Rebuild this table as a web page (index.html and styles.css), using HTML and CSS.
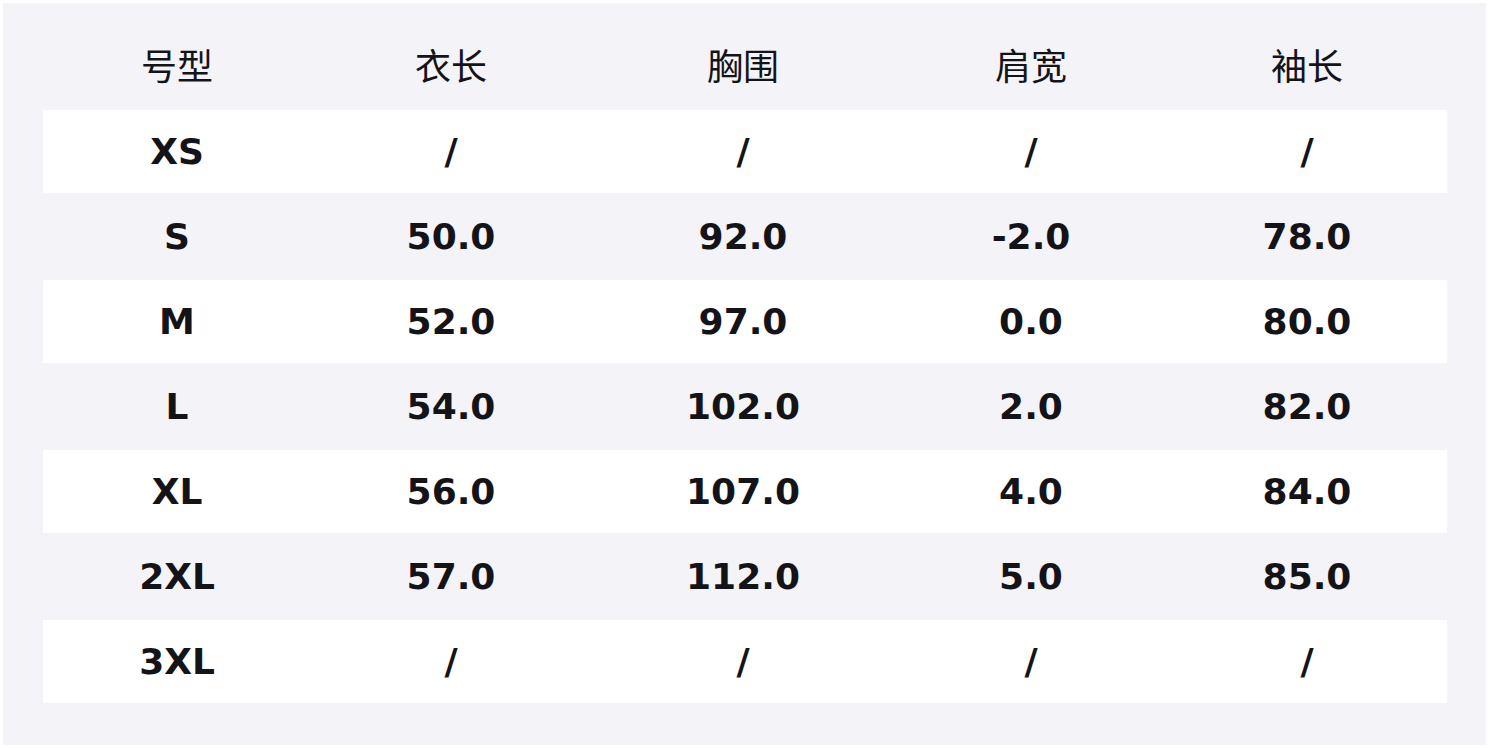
FILE: index.html
```html
<!DOCTYPE html>
<html lang="zh">
<head>
<meta charset="utf-8">
<link rel="stylesheet" href="styles.css">
</head>
<body>
<div class="panel">
  <div class="table">
    <div class="row head">
      <div class="cell">号型</div><div class="cell">衣长</div><div class="cell">胸围</div><div class="cell">肩宽</div><div class="cell">袖长</div>
    </div>
    <div class="row white">
      <div class="cell">XS</div><div class="cell">/</div><div class="cell">/</div><div class="cell">/</div><div class="cell">/</div>
    </div>
    <div class="row">
      <div class="cell">S</div><div class="cell">50.0</div><div class="cell">92.0</div><div class="cell">-2.0</div><div class="cell">78.0</div>
    </div>
    <div class="row white">
      <div class="cell">M</div><div class="cell">52.0</div><div class="cell">97.0</div><div class="cell">0.0</div><div class="cell">80.0</div>
    </div>
    <div class="row">
      <div class="cell">L</div><div class="cell">54.0</div><div class="cell">102.0</div><div class="cell">2.0</div><div class="cell">82.0</div>
    </div>
    <div class="row white">
      <div class="cell">XL</div><div class="cell">56.0</div><div class="cell">107.0</div><div class="cell">4.0</div><div class="cell">84.0</div>
    </div>
    <div class="row">
      <div class="cell">2XL</div><div class="cell">57.0</div><div class="cell">112.0</div><div class="cell">5.0</div><div class="cell">85.0</div>
    </div>
    <div class="row white">
      <div class="cell">3XL</div><div class="cell">/</div><div class="cell">/</div><div class="cell">/</div><div class="cell">/</div>
    </div>
  </div>
</div>
</body>
</html>
```
FILE: styles.css
```css
html, body {
  margin: 0;
  padding: 0;
  background: #ffffff;
}
body {
  padding: 3px 4px 3px 3px;
  font-family: "DejaVu Sans", "Noto Sans CJK SC", sans-serif;
  color: #141418;
}
.panel {
  background: #f3f3f8;
  height: 742px;
  box-sizing: border-box;
  padding: 22px 39px 0 40px;
}
.table {
  display: flex;
  flex-direction: column;
  gap: 2px;
}
.row {
  display: grid;
  grid-template-columns: 268px 280px 304px 272px 280px;
  height: 83px;
  align-items: center;
  font-size: 36px;
  font-weight: bold;
}
.row.white {
  background: #ffffff;
}
.row.head {
  font-family: "Noto Sans CJK SC", sans-serif;
  font-weight: normal;
  font-size: 36px;
  padding-bottom: 5px;
  box-sizing: border-box;
}
.cell {
  text-align: center;
}
```
